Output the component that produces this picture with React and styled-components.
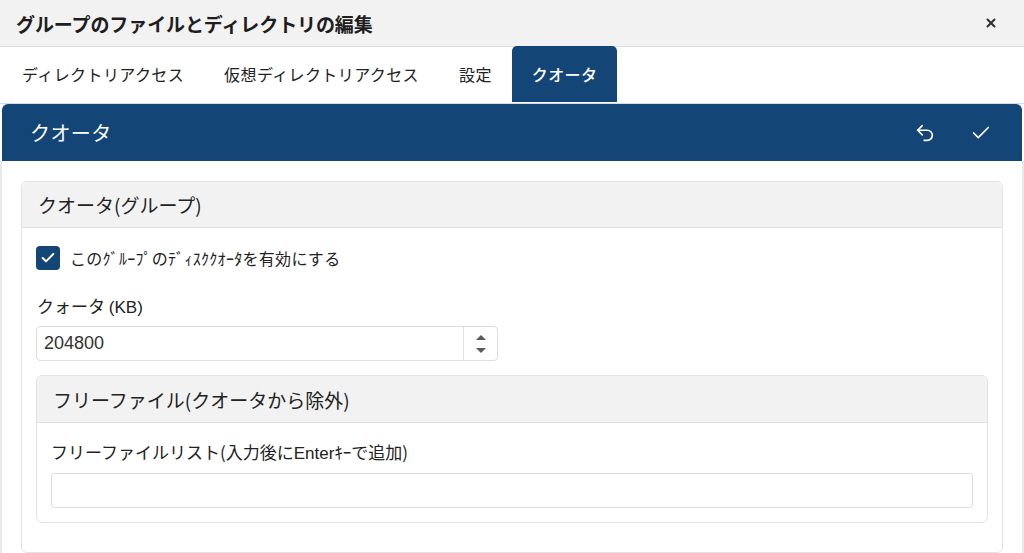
import React from "react";
import styled, { createGlobalStyle } from "styled-components";
import { X, Undo2, Check } from "lucide-react";

const GlobalStyle = createGlobalStyle`
  html, body {
    margin: 0;
    padding: 0;
    background: #ffffff;
    font-family: "Noto Sans CJK JP", "Noto Sans", sans-serif;
    color: #222222;
  }
  * {
    box-sizing: border-box;
  }
`;

const Dialog = styled.div`
  width: 1024px;
  height: 553px;
  display: flex;
  flex-direction: column;
  overflow: hidden;
  background: #ffffff;
`;

const TitleBar = styled.div`
  height: 47px;
  flex-shrink: 0;
  display: flex;
  align-items: center;
  justify-content: space-between;
  padding: 0 26px 0 16px;
  background: #f2f2f2;
  border-bottom: 1px solid #dcdcdc;
`;

const Title = styled.h1`
  margin: 0;
  font-size: 19px;
  font-weight: 700;
  color: #1e1e1e;
  letter-spacing: -0.1px;
`;

const CloseButton = styled.button`
  border: none;
  background: none;
  padding: 0;
  display: flex;
  color: #333333;
  cursor: pointer;
`;

const TabBar = styled.div`
  height: 57px;
  flex-shrink: 0;
  display: flex;
  align-items: flex-end;
  padding: 0 2px;
  border-bottom: 1px solid #d3dde8;
`;

const Tab = styled.div`
  height: 56px;
  display: flex;
  align-items: center;
  padding: 0 20px;
  font-size: 16px;
  letter-spacing: 0.4px;
  border-radius: 5px 5px 0 0;
  color: ${(p) => (p.$active ? "#ffffff" : "#222222")};
  background: ${(p) => (p.$active ? "#134576" : "transparent")};
  font-weight: ${(p) => (p.$active ? 500 : 400)};
  margin-bottom: 1px;
`;

const PanelHeader = styled.div`
  height: 57px;
  flex-shrink: 0;
  margin: 0 2px;
  display: flex;
  align-items: center;
  justify-content: space-between;
  padding: 0 30px 0 28px;
  background: #134576;
  border-radius: 6px 6px 0 0;
  color: #ffffff;
`;

const PanelTitle = styled.span`
  font-size: 20px;
  font-weight: 400;
  letter-spacing: 0.4px;
`;

const HeaderActions = styled.div`
  display: flex;
  align-items: center;
  gap: 34px;
`;

const IconButton = styled.button`
  border: none;
  background: none;
  padding: 0;
  display: flex;
  color: #ffffff;
  cursor: pointer;
`;

const PanelBody = styled.div`
  flex: 1;
  padding: 20px 19px 0;
  border-left: 2px solid #e8e8e8;
  border-right: 2px solid #e8e8e8;
`;

const Card = styled.div`
  border: 1px solid #e3e3e3;
  border-radius: 6px;
  background: #ffffff;
  margin: ${(p) => p.$margin || "0"};
`;

const CardHeader = styled.div`
  height: ${(p) => p.$height || 46}px;
  display: flex;
  align-items: center;
  padding: 0 16px;
  background: #f2f2f2;
  border-bottom: 1px solid #e0e0e0;
  border-radius: 6px 6px 0 0;
  font-size: 19px;
  color: #222222;
`;

const CardBody = styled.div`
  padding: ${(p) => p.$padding};
`;

const CheckRow = styled.label`
  height: 24px;
  display: flex;
  align-items: center;
  gap: 10px;
  font-size: 16px;
  letter-spacing: 0.3px;
  color: #222222;
`;

const CheckBox = styled.span`
  width: 24px;
  height: 24px;
  border-radius: 4px;
  background: #134576;
  display: flex;
  align-items: center;
  justify-content: center;
  color: #ffffff;
`;

const FieldLabel = styled.div`
  font-size: 17px;
  line-height: 24px;
  color: #222222;
  margin: ${(p) => p.$margin || "0"};
`;

const Latin = styled.span`
  font-family: "Liberation Sans", Arial, sans-serif;
`;

const NumberBox = styled.div`
  width: 462px;
  height: 35px;
  display: flex;
  border: 1px solid #dedede;
  border-radius: 4px;
  margin-top: 6px;
`;

const NumberValue = styled.div`
  flex: 1;
  display: flex;
  align-items: center;
  padding: 0 7px;
  font-family: "Liberation Sans", Arial, sans-serif;
  font-size: 18px;
  color: #333333;
`;

const Spinner = styled.div`
  width: 34px;
  border-left: 1px solid #dedede;
  display: flex;
  flex-direction: column;
  align-items: center;
  justify-content: center;
  gap: 8px;
`;

const Arrow = styled.span`
  width: 0;
  height: 0;
  border-left: 5px solid transparent;
  border-right: 5px solid transparent;
  ${(p) =>
    p.$up
      ? "border-bottom: 5px solid #5a5a5a;"
      : "border-top: 5px solid #5a5a5a;"}
`;

const TextBox = styled.div`
  height: 35px;
  border: 1px solid #dedede;
  border-radius: 3px;
  margin-top: 7px;
`;

const tabs = ["ディレクトリアクセス", "仮想ディレクトリアクセス", "設定", "クオータ"];

export default function App() {
  return (
    <>
      <GlobalStyle />
      <Dialog>
        <TitleBar>
          <Title>グループのファイルとディレクトリの編集</Title>
          <CloseButton>
            <X size={14} strokeWidth={3.5} />
          </CloseButton>
        </TitleBar>
        <TabBar>
          {tabs.map((t, i) => (
            <Tab key={t} $active={i === tabs.length - 1}>
              {t}
            </Tab>
          ))}
        </TabBar>
        <PanelHeader>
          <PanelTitle>クオータ</PanelTitle>
          <HeaderActions>
            <IconButton>
              <Undo2 size={22} strokeWidth={1.8} />
            </IconButton>
            <IconButton>
              <Check size={22} strokeWidth={1.8} />
            </IconButton>
          </HeaderActions>
        </PanelHeader>
        <PanelBody>
          <Card>
            <CardHeader>クオータ(グループ)</CardHeader>
            <CardBody $padding="18px 14px 29px 14px">
              <CheckRow>
                <CheckBox>
                  <Check size={16} strokeWidth={3} />
                </CheckBox>
                このｸﾞﾙｰﾌﾟのﾃﾞｨｽｸｸｵｰﾀを有効にする
              </CheckRow>
              <FieldLabel $margin="24px 0 0 1px">
                クォータ <Latin>(KB)</Latin>
              </FieldLabel>
              <NumberBox>
                <NumberValue>204800</NumberValue>
                <Spinner>
                  <Arrow $up />
                  <Arrow />
                </Spinner>
              </NumberBox>
              <Card $margin="14px 0 0">
                <CardHeader $height={47}>フリーファイル(クオータから除外)</CardHeader>
                <CardBody $padding="17px 14px 14px 14px">
                  <FieldLabel>
                    フリーファイルリスト(入力後に<Latin>Enter</Latin>ｷｰで追加)
                  </FieldLabel>
                  <TextBox />
                </CardBody>
              </Card>
            </CardBody>
          </Card>
        </PanelBody>
      </Dialog>
    </>
  );
}
